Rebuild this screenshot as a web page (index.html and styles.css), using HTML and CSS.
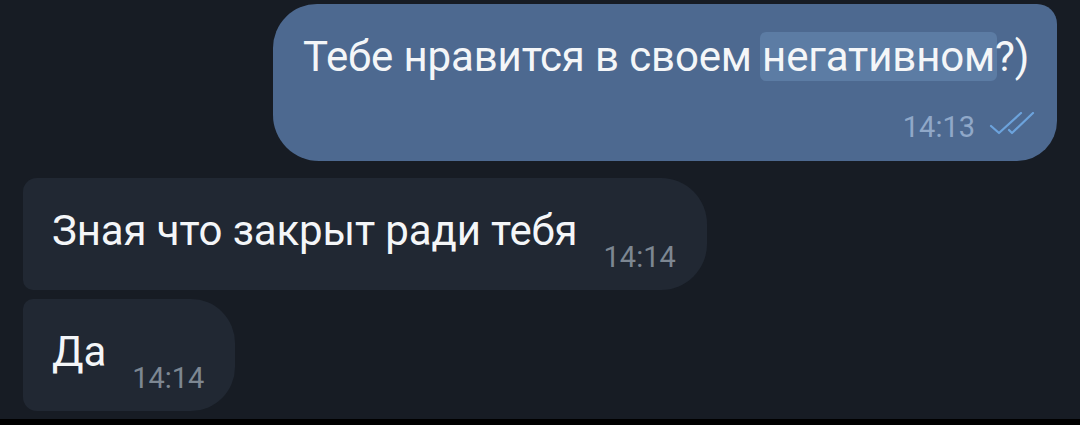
FILE: index.html
```html
<!DOCTYPE html>
<html lang="ru">
<head>
  <meta charset="UTF-8">
  <title>Чат</title>
  <link rel="stylesheet" href="styles.css">
</head>
<body>
  <div class="chat">
    <div class="bubble bubble-out">
      <div class="bubble-text">Тебе нравится в своем <span class="mark">негативном</span>?)</div>
      <div class="meta">
        <span class="time">14:13</span>
        <svg class="checks" width="46" height="24" viewBox="0 0 46 24">
          <path d="M2 14 L10 21 L32 1" fill="none" stroke="#6ca3dc" stroke-width="2.2" stroke-linecap="round" stroke-linejoin="round"/>
          <path d="M20 18 L23 21 L44 1" fill="none" stroke="#6ca3dc" stroke-width="2.2" stroke-linecap="round" stroke-linejoin="round"/>
        </svg>
      </div>
    </div>

    <div class="bubble bubble-in first">
      <div class="bubble-text">Зная что закрыт ради тебя</div>
      <span class="time">14:14</span>
    </div>

    <div class="bubble bubble-in last">
      <div class="bubble-text">Да</div>
      <span class="time">14:14</span>
    </div>
  </div>
  <div class="nav-strip"></div>
</body>
</html>
```

FILE: styles.css
```css
* {
  box-sizing: border-box;
  margin: 0;
  padding: 0;
}

body {
  height: 425px;
  overflow: hidden;
  display: flex;
  flex-direction: column;
  background-color: #171c24;
  font-family: 'Roboto', 'Noto Sans', sans-serif;
  color: #f4f6f8;
}

.chat {
  flex: 1;
  display: flex;
  flex-direction: column;
  align-items: flex-start;
  padding: 4px 23px 0 23px;
}

.bubble {
  display: flex;
}

.bubble-text {
  font-size: 42px;
  line-height: 50px;
  letter-spacing: -0.15px;
  white-space: nowrap;
}

.time {
  font-size: 29px;
  line-height: 34px;
}

/* исходящее */
.bubble-out {
  align-self: flex-end;
  flex-direction: column;
  width: 784px;
  height: 157px;
  padding: 28px 0 0 30px;
  background-color: #4d6990;
  border-radius: 44px 20px 40px 46px;
}

.mark {
  background-color: #5c7ca4;
  border-radius: 6px;
  padding: 0 2px;
  margin: 0 -2px;
}

.meta {
  display: flex;
  align-items: center;
  justify-content: flex-end;
  gap: 14px;
  margin-top: 28px;
  padding-right: 22px;
}

.bubble-out .time {
  color: #90a8c8;
}

.checks {
  margin-top: -6px;
}

/* входящие */
.bubble-in {
  align-items: flex-start;
  height: 112px;
  padding: 28px 31px 0 29px;
  background-color: #212833;
}

.bubble-in .time {
  color: #7d8792;
  margin-top: 34px;
  margin-left: 26px;
}

.bubble-in.first {
  margin-top: 17px;
  border-radius: 14px 46px 46px 10px;
}

.bubble-in.last {
  margin-top: 9px;
  border-radius: 10px 44px 44px 14px;
}

.nav-strip {
  height: 6px;
  background-color: #000;
}
```
